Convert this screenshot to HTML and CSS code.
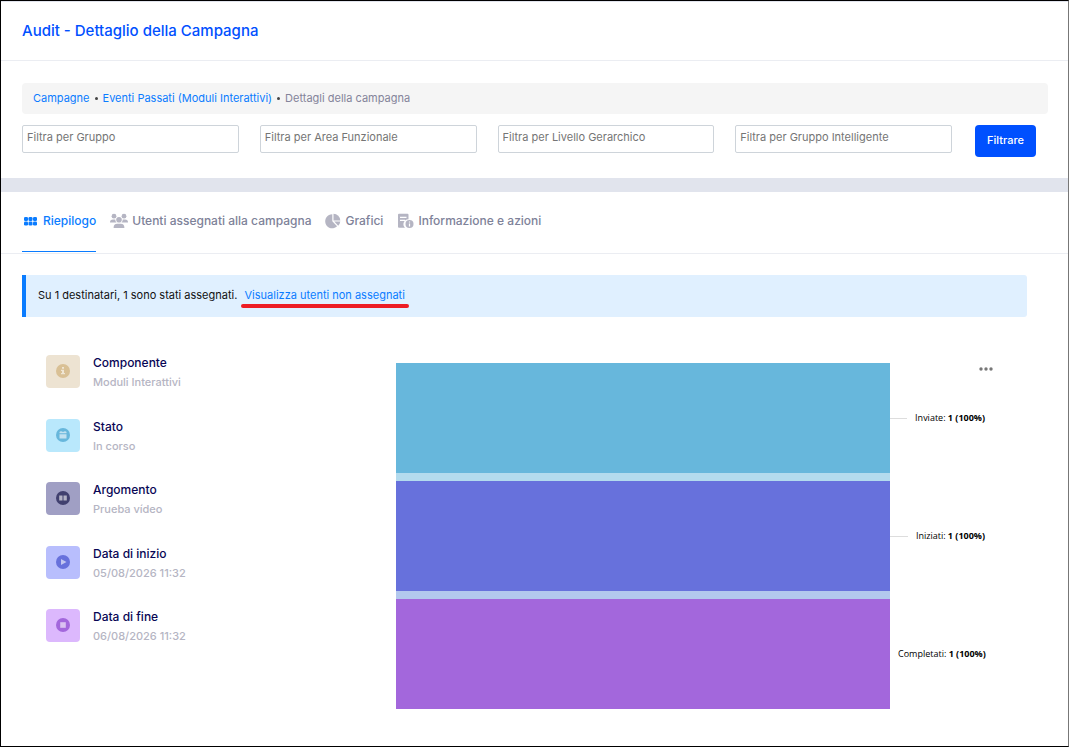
FILE: index.html
```
<!DOCTYPE html>
<html lang="it">
<head>
    <meta charset="UTF-8">
    <meta name="viewport" content="width=device-width, initial-scale=1.0">
    <title>Audit - Dettaglio della Campagna</title>
    <link rel="stylesheet" href="styles.css">
</head>
<body>
    <header class="page-header">
        <h1>Audit - Dettaglio della Campagna</h1>
    </header>

    <section class="filters">
        <nav class="breadcrumb" aria-label="Breadcrumb">
            <a href="#">Campagne</a>
            <span class="dot"></span>
            <a href="#">Eventi Passati (Moduli Interattivi)</a>
            <span class="dot"></span>
            <span class="current">Dettagli della campagna</span>
        </nav>
        <form class="filter-form">
            <div class="filter-fields">
                <input type="text" aria-label="Filtra per Gruppo" placeholder="Filtra per Gruppo">
                <input type="text" aria-label="Filtra per Area Funzionale" placeholder="Filtra per Area Funzionale">
                <input type="text" aria-label="Filtra per Livello Gerarchico" placeholder="Filtra per Livello Gerarchico">
                <input type="text" aria-label="Filtra per Gruppo Intelligente" placeholder="Filtra per Gruppo Intelligente">
            </div>
            <button type="button" class="btn-primary">Filtrare</button>
        </form>
    </section>

    <nav class="tabs">
        <a href="#" class="tab active">
            <svg width="17" height="16" viewBox="0 0 17 16" fill="currentColor">
                <rect x="2" y="4" width="4" height="4" rx="1.3"/>
                <rect x="6.5" y="4" width="4" height="4" rx="1.3"/>
                <rect x="11" y="4" width="4" height="4" rx="1.3"/>
                <rect x="2" y="8.5" width="4" height="4" rx="1.3"/>
                <rect x="6.5" y="8.5" width="4" height="4" rx="1.3"/>
                <rect x="11" y="8.5" width="4" height="4" rx="1.3"/>
            </svg>
            Riepilogo
        </a>
        <a href="#" class="tab">
            <svg width="18" height="16" viewBox="0 0 18 16" fill="currentColor">
                <circle cx="4" cy="3.2" r="2.4"/>
                <circle cx="14" cy="3.2" r="2.4"/>
                <circle cx="9" cy="6.8" r="2.8"/>
                <path d="M0 9.4Q0 6.6 3 6.6h2.2q.1 2 1.3 2.8zM18 9.4q0-2.8-3-2.8h-2.2q-.1 2-1.3 2.8zM3.6 15q0-4.2 3.6-4.2h3.6q3.6 0 3.6 4.2z"/>
            </svg>
            Utenti assegnati alla campagna
        </a>
        <a href="#" class="tab">
            <svg width="16" height="16" viewBox="0 0 16 16" fill="currentColor">
                <path d="M7.3 1.3v7l4.8 5A7 7 0 1 1 7.3 1.3z"/>
                <path d="M8.5.8a6.8 6.8 0 0 1 6.8 6.6H8.5z"/>
                <path d="M9.2 8.6h6.1a6.6 6.6 0 0 1-2.1 4.2z"/>
            </svg>
            Grafici
        </a>
        <a href="#" class="tab">
            <svg width="17" height="16" viewBox="0 0 17 16" fill="currentColor">
                <path d="M2 .8h8.5q1 0 1 1v4.4A5 5 0 0 0 8 14.8H2q-1 0-1-1v-12q0-1 1-1z"/>
                <path d="M3 4.3h6.5M3 7.3h5" stroke="#fff" stroke-width="1.2"/>
                <circle cx="12.5" cy="11" r="4"/>
                <path d="M12.5 10.4v3M12.5 8.5v1.1" stroke="#fff" stroke-width="1.2"/>
            </svg>
            Informazione e azioni
        </a>
    </nav>

    <main class="content">
        <div class="alert">
            Su 1 destinatari, 1 sono stati assegnati.
            <a href="#" class="marked">Visualizza utenti non assegnati</a>
        </div>

        <div class="summary">
            <ul class="details">
                <li>
                    <span class="badge component">
                        <svg width="14" height="14" viewBox="0 0 14 14">
                            <circle cx="7" cy="7" r="7" fill="currentColor"/>
                            <path class="mark" d="M6 3h2v1.7H6zM5 5.8h3V9h1v1.2H5V9h1V7H5z"/>
                        </svg>
                    </span>
                    <div><h2>Componente</h2><p>Moduli Interattivi</p></div>
                </li>
                <li>
                    <span class="badge status">
                        <svg width="14" height="14" viewBox="0 0 14 14">
                            <circle cx="7" cy="7" r="7" fill="currentColor"/>
                            <path class="mark" d="M4.5 3h1v.7h3V3h1v.7h1v1.6h-7V3.7h1zM3.5 6.3h7v4.2h-7z"/>
                        </svg>
                    </span>
                    <div><h2>Stato</h2><p>In corso</p></div>
                </li>
                <li>
                    <span class="badge topic">
                        <svg width="14" height="14" viewBox="0 0 14 14">
                            <circle cx="7" cy="7" r="7" fill="currentColor"/>
                            <path class="mark" d="M3.2 4.4h3.3v5H3.2zM7.5 4.4h3.3v5H7.5z"/>
                        </svg>
                    </span>
                    <div><h2>Argomento</h2><p>Prueba vídeo</p></div>
                </li>
                <li>
                    <span class="badge start">
                        <svg width="14" height="14" viewBox="0 0 14 14">
                            <circle cx="7" cy="7" r="7" fill="currentColor"/>
                            <path class="mark" d="M5 4v6l5.5-3z"/>
                        </svg>
                    </span>
                    <div><h2>Data di inizio</h2><p>05/08/2026 11:32</p></div>
                </li>
                <li>
                    <span class="badge end">
                        <svg width="14" height="14" viewBox="0 0 14 14">
                            <circle cx="7" cy="7" r="7" fill="currentColor"/>
                            <path class="mark" d="M4.2 4.2h5.6v5.6H4.2z"/>
                        </svg>
                    </span>
                    <div><h2>Data di fine</h2><p>06/08/2026 11:32</p></div>
                </li>
            </ul>

            <div class="funnel">
                <button type="button" class="menu" aria-label="Menu">
                    <svg width="14" height="4" viewBox="0 0 14 4" fill="currentColor">
                        <circle cx="2" cy="2" r="1.7"/>
                        <circle cx="7" cy="2" r="1.7"/>
                        <circle cx="12" cy="2" r="1.7"/>
                    </svg>
                </button>
                <div class="stage">
                    <div class="bar sent"></div>
                    <div class="label"><span>Inviate: <b>1 (100%)</b></span></div>
                </div>
                <div class="stage">
                    <div class="link sent-started"></div>
                </div>
                <div class="stage">
                    <div class="bar started"></div>
                    <div class="label"><span>Iniziati: <b>1 (100%)</b></span></div>
                </div>
                <div class="stage">
                    <div class="link started-completed"></div>
                </div>
                <div class="stage">
                    <div class="bar completed"></div>
                    <div class="label"><span>Completati: <b>1 (100%)</b></span></div>
                </div>
            </div>
        </div>
    </main>
</body>
</html>
```
FILE: styles.css
```
* {
    box-sizing: border-box;
}
body {
    font-family: Inter, "Liberation Sans", sans-serif;
    font-size: 11px;
    line-height: 16px;
    color: #111;
    background-color: #fff;
    margin: 0;
    min-height: 100vh;
    border: 1px solid #000;
    border-right-color: #777;
}
a {
    color: #0a7cff;
    text-decoration: none;
}
h1, h2, p, ul {
    margin: 0;
    padding: 0;
}
.page-header {
    padding: 18px 21px;
    border-top: 1px solid #e1e4ed;
    border-bottom: 1px solid #ebedf2;
}
h1 {
    font-size: 15px;
    line-height: 22px;
    font-weight: 500;
    color: #0050ff;
}
.filters {
    padding: 22px 20px 21px 21px;
    border-bottom: 14px solid #e1e4ed;
}
.breadcrumb {
    display: flex;
    align-items: center;
    height: 31px;
    padding: 0 11px 1px;
    background-color: #f5f5f5;
    border-radius: 4px;
}
.breadcrumb .dot {
    width: 3px;
    height: 3px;
    margin: 0 5px;
    border-radius: 50%;
    background-color: #444;
}
.breadcrumb .current {
    color: #84849a;
}
.filter-form {
    display: flex;
    align-items: flex-start;
    margin-top: 11px;
    padding-right: 12px;
}
.filter-fields {
    flex: 1;
    display: grid;
    grid-template-columns: repeat(4, 1fr);
    gap: 21px;
    margin-right: 23px;
}
.filter-fields input {
    width: 100%;
    height: 28px;
    padding: 0 4px 4px;
    font-family: inherit;
    font-size: 11px;
    border: 1px solid #ced4da;
    border-radius: 2px;
}
.filter-fields input::placeholder {
    color: #757575;
}
.btn-primary {
    width: 61px;
    height: 32px;
    padding: 0 0 2px;
    font-family: inherit;
    font-size: 11px;
    font-weight: 500;
    color: #fff;
    background-color: #0050ff;
    border: none;
    border-radius: 4px;
    cursor: pointer;
}
.tabs {
    display: flex;
    gap: 14px;
    padding: 0 21px 1px;
    border-bottom: 1px solid #ebedf2;
}
.tab {
    display: flex;
    align-items: center;
    gap: 4px;
    height: 60px;
    padding-bottom: 2px;
    font-size: 12px;
    font-weight: 500;
    color: #7e8299;
    border-bottom: 1px solid transparent;
}
.tab svg {
    color: #b5b5c3;
}
.tab.active, .tab.active svg {
    color: #0a7cff;
}
.tab.active {
    border-bottom-color: #0a7cff;
}
.content {
    padding: 21px 41px 37px 21px;
}
.alert {
    padding: 12px 12px 14px;
    background-color: #e0f0ff;
    border-left: 4px solid #0a7cff;
    border-radius: 0 3px 3px 0;
}
.marked {
    position: relative;
    margin-left: 4px;
}
.marked::after {
    content: "";
    position: absolute;
    left: -4px;
    right: -4px;
    bottom: -6px;
    height: 4px;
    border-radius: 2px;
    background-color: #ed1c24;
}
.summary {
    display: grid;
    grid-template-columns: 35% 1fr;
    padding: 38px 0 0 24px;
}
.details {
    display: flex;
    flex-direction: column;
    justify-content: space-between;
    height: 289px;
    list-style: none;
}
.details li {
    display: flex;
    gap: 13px;
}
.details h2 {
    font-size: 12px;
    line-height: 16px;
    font-weight: 500;
    color: #080655;
}
.details p {
    margin-top: 3px;
    font-weight: 500;
    color: #b5b5c3;
}
.badge {
    display: flex;
    align-items: center;
    justify-content: center;
    width: 34px;
    height: 33px;
    padding-bottom: 1px;
    border-radius: 4px;
}
.mark {
    fill: #fff;
    fill-opacity: 0.6;
}
.component {
    color: #d9c095;
    background-color: #ede3d2;
}
.status {
    color: #67b7dc;
    background-color: #b9e8fc;
}
.topic {
    color: #41406f;
    background-color: #a09fc4;
}
.start {
    color: #6771dc;
    background-color: #b8befd;
}
.end {
    color: #a367dc;
    background-color: #dcb8fd;
}
.funnel {
    position: relative;
    padding: 8px 42px 0 7px;
}
.menu {
    position: absolute;
    top: 8px;
    right: 29px;
    display: flex;
    align-items: center;
    justify-content: center;
    height: 12px;
    padding: 0 5px;
    color: #777;
    background: none;
    border: none;
    cursor: pointer;
}
.stage {
    display: flex;
    padding-right: 95px;
}
.bar {
    flex: 1;
    height: 110px;
}
.link {
    flex: 1;
    height: 8px;
}
.label {
    display: flex;
    align-items: center;
    gap: 8px;
    width: 95px;
    margin-right: -95px;
    font-family: "Open Sans", "Noto Sans", sans-serif;
    font-size: 9px;
    color: #000;
    white-space: nowrap;
}
.label::before {
    content: "";
    flex: 1;
    height: 1px;
    background-color: #ddd;
}
.sent {
    background-color: #67b7dc;
}
.sent-started {
    background-color: #b3dbee;
}
.started {
    background-color: #6771dc;
}
.started-completed {
    background-color: #b3c8ee;
}
.completed {
    background-color: #a367dc;
}
```
